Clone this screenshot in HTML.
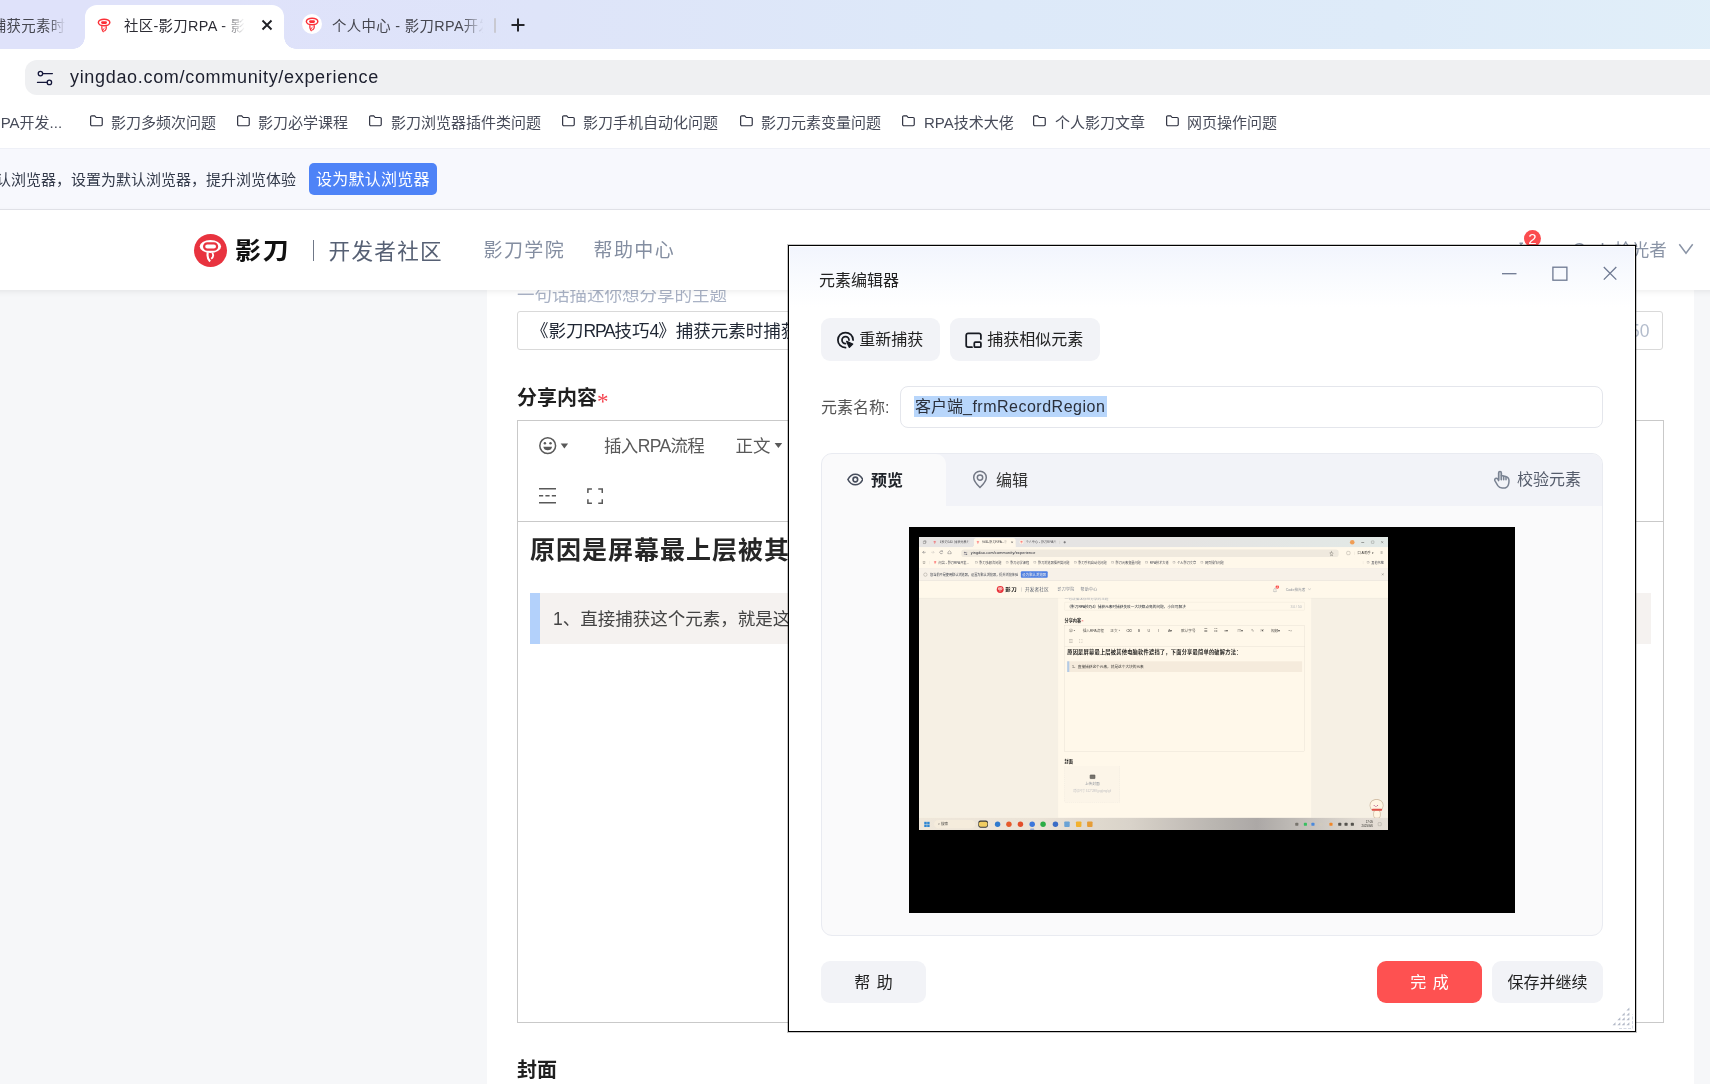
<!DOCTYPE html>
<html lang="zh-CN">
<head>
<meta charset="utf-8">
<title>社区-影刀RPA</title>
<style>
*{box-sizing:border-box;margin:0;padding:0}
html,body{width:1710px;height:1084px;overflow:hidden;background:#fff}
body{position:relative;font-family:"Liberation Sans","Noto Sans CJK SC",sans-serif;color:#222;font-size:15px}
.a{position:absolute;white-space:nowrap}
.scr{position:absolute;left:0;top:0;width:2240px;height:1400px;overflow:hidden;background:#fff}
.tabbar{left:0;top:0;width:2240px;height:49px;background:linear-gradient(90deg,#dfe2fa 0%,#dfe2fa 18%,#dee4f9 32%,#dde9f9 52%,#deebf9 70%,#e1eff9 86%,#e1eff9 100%)}
.tabact{top:5px;width:199px;height:44px;background:#fff;border-radius:12px 12px 0 0}
.tabact:before,.tabact:after{content:"";position:absolute;bottom:0;width:12px;height:12px}
.tabact:before{left:-12px;background:radial-gradient(circle at 0 0,rgba(255,255,255,0) 11.500px,#fff 12px)}
.tabact:after{right:-12px;background:radial-gradient(circle at 100% 0,rgba(255,255,255,0) 11.500px,#fff 12px)}
.tt{font-size:14.400px;color:#2b2b33;top:14.500px;line-height:22px;overflow:hidden;letter-spacing:.35px}
.addr{left:0;top:49px;width:2240px;height:47px;background:#fff}
.pill{top:60px;height:35px;background:#eff0f2;border-radius:12px}
.url{top:65px;font-size:18px;line-height:24px;color:#1c1f2e;letter-spacing:.68px}
.bm{left:0;top:96px;width:2240px;height:52px;background:#fff}
.bmi{top:113px;font-size:15px;line-height:20px;color:#474b59}
.fold{top:115px;width:13.500px;height:11.700px}
.info{left:0;top:148px;width:2240px;height:62px;background:#f7f8fd;border-top:1px solid #eef0f7;border-bottom:1px solid #e3e4ea}
.infot{top:169px;font-size:15px;line-height:22px;color:#333a4a}
.setbtn{top:163px;width:128px;height:32px;border-radius:5px;background:#4e83f7;color:#fff;font-size:16px;line-height:34.500px;text-align:center;letter-spacing:.25px}
.pagebg{left:0;top:210px;width:2240px;height:1130px;background:#f6f7f9}
.col{top:290px;width:1207px;height:1050px;background:#fff}
.hdr{left:0;top:210px;width:2240px;height:80px;background:#fff;box-shadow:0 2px 6px rgba(0,0,0,.07)}
.logo{top:234px;width:33px;height:33px;border-radius:50%;background:#e8333f}
.brand{top:232.500px;font-size:26px;line-height:36px;font-weight:700;color:#111;letter-spacing:1.700px;transform:scaleY(.93);transform-origin:0 50%}
.sep{top:240px;width:1px;height:21px;background:#6f7787}
.comm{top:233.500px;font-size:21.600px;line-height:36px;color:#566074;letter-spacing:1.300px}
.nav{top:236px;font-size:19px;line-height:30px;color:#848ea1;letter-spacing:1.400px}
.ph{top:283px;font-size:17.500px;line-height:24px;color:#a9b2c5}
.tinput{top:311px;width:1146px;height:39px;border:1px solid #d9d9d9;border-radius:3px;background:#fff}
.tin{top:318px;font-size:17.500px;line-height:26px;color:#1f2633}
.h20{font-size:20px;line-height:28px;font-weight:700;color:#1f1f1f}
.ed{top:420px;width:1147px;height:603px;border:1px solid #c9c9c9;background:#fff}
.edline{top:521px;width:1145px;height:1px;background:#c9c9c9}
.tb{font-size:17.500px;line-height:26px;color:#595959;top:433px}
.h26{top:530.500px;font-size:25px;line-height:38px;font-weight:700;color:#262626;letter-spacing:1px}
.bq{top:593px;width:1121px;height:51px;background:#f5f2f0;border-left:10px solid #b3d1fb}
.bqt{top:606px;font-size:17.500px;line-height:26px;color:#434343}
.task{left:0;top:1340px;width:2240px;height:60px;background:linear-gradient(90deg,#efeeee 0%,#ebeaeb 25%,#d9d9dc 45%,#bbbcc2 62%,#acadb5 72%,#c9cad0 84%,#e2e2e6 94%,#e6e6ea 100%)}
/* dialog */
.dlg{left:788px;top:245px;width:848px;height:787px;border:1px solid #000;background:#fff;box-shadow:0 0 0 1px rgba(0,0,0,.22)}
.dgrad{left:1px;top:1px;width:844px;height:60px;background:linear-gradient(180deg,#f2f5fd 0%,#f8fafe 45%,#fff 100%)}
.d16{font-size:16px;line-height:24px;color:#222}
.gbtn{background:#f2f3f7;border-radius:9px;height:42.600px}
.dinput{left:900px;top:386px;width:703px;height:42px;border:1px solid #e4e6ec;border-radius:8px;background:#fff}
.sel{left:914px;top:396px;height:21px;background:#b8d6fb}
.panel{left:821px;top:453px;width:782px;height:483px;border:1px solid #e9ebf1;border-radius:11px;background:#fafafb;overflow:hidden}
.ptabs{left:0;top:0;width:782px;height:52px;background:#f2f3f8}
.ptact{left:0;top:0;width:124px;height:53px;background:#fafafb;border-radius:10px 10px 0 0}
.black{left:909px;top:527px;width:606px;height:386px;background:#000}
.inner{left:918.500px;top:536.500px;width:469.500px;height:293.500px;overflow:hidden}
.inner .scr{transform:scale(.2096);transform-origin:0 0}
.inner .tabbar{background:linear-gradient(90deg,#e6ebf8 0%,#e5ebf8 55%,#e2f0fb 100%)}
.tint{left:0;top:0;width:470px;height:294px;background:#fff8ea;mix-blend-mode:multiply}
</style>
</head>
<body>
<div class="scr" style="left:-177px">
<div class="a tabbar"></div>
<svg class="a" style="left:18px;top:16px" width="18" height="18" viewBox="0 0 18 18" fill="none" stroke="#333" stroke-width="1.500"><rect x="1.500" y="4.500" width="12" height="11" rx="2"/><path d="M5 1.500h9.500a2 2 0 0 1 2 2V12"/></svg>
<svg class="a" style="left:68px;top:18px" width="14" height="15" viewBox="0 0 14 15"><ellipse cx="7.100" cy="4.500" rx="5.750" ry="3.250" fill="none" stroke="#fb3038" stroke-width="1.450"/><rect x="4.100" y="3.200" width="5.900" height="2.700" rx="1.350" fill="#fb3038"/><path d="M4.900 8.100c-.400 2.500.200 4.500 1.700 6M9.100 8.100c.600 2.100-.100 3.900-1.800 5.100" fill="none" stroke="#fb3038" stroke-width="1.150"/><path d="M7.700 9.700c-.900.700-1.300 1.500-1.300 2.400" fill="none" stroke="#fb3038" stroke-width=".800"/></svg>
<div class="a tt" style="left:93px;width:151px;color:#45464f;-webkit-mask-image:linear-gradient(90deg,#000 88%,transparent 99%);mask-image:linear-gradient(90deg,#000 88%,transparent 99%)">【技巧54】捕获元素时捕获</div>
<div class="a tabact" style="left:261.5px;width:199.500px"></div>
<svg class="a" style="left:274px;top:18px" width="14" height="15" viewBox="0 0 14 15"><ellipse cx="7.100" cy="4.500" rx="5.750" ry="3.250" fill="none" stroke="#fb3038" stroke-width="1.450"/><rect x="4.100" y="3.200" width="5.900" height="2.700" rx="1.350" fill="#fb3038"/><path d="M4.900 8.100c-.400 2.500.200 4.500 1.700 6M9.100 8.100c.600 2.100-.100 3.900-1.800 5.100" fill="none" stroke="#fb3038" stroke-width="1.150"/><path d="M7.700 9.700c-.900.700-1.300 1.500-1.300 2.400" fill="none" stroke="#fb3038" stroke-width=".800"/></svg>
<div class="a tt" style="left:301px;width:122px;-webkit-mask-image:linear-gradient(90deg,#000 80%,transparent 99%);mask-image:linear-gradient(90deg,#000 80%,transparent 99%)">社区-影刀RPA - 影刀</div>
<svg class="a" style="left:438px;top:19px" width="12" height="12" viewBox="0 0 12 12"><path d="M1.500 1.500l9 9M10.500 1.500l-9 9" stroke="#1f2026" stroke-width="1.900" fill="none"/></svg>
<div class="a" style="left:479px;top:14px;width:20px;height:20px;border-radius:50%;background:#fff"></div>
<svg class="a" style="left:482px;top:17px" width="14" height="15" viewBox="0 0 14 15"><ellipse cx="7.100" cy="4.500" rx="5.750" ry="3.250" fill="none" stroke="#fb3038" stroke-width="1.450"/><rect x="4.100" y="3.200" width="5.900" height="2.700" rx="1.350" fill="#fb3038"/><path d="M4.900 8.100c-.400 2.500.200 4.500 1.700 6M9.100 8.100c.600 2.100-.100 3.900-1.800 5.100" fill="none" stroke="#fb3038" stroke-width="1.150"/><path d="M7.700 9.700c-.900.700-1.300 1.500-1.300 2.400" fill="none" stroke="#fb3038" stroke-width=".800"/></svg>
<div class="a tt" style="left:509px;width:153px;color:#45464f;-webkit-mask-image:linear-gradient(90deg,#000 85%,transparent 99%);mask-image:linear-gradient(90deg,#000 85%,transparent 99%)">个人中心 - 影刀RPA开发</div>
<div class="a" style="left:671px;top:18px;width:2px;height:15px;background:#c9c9d1;border-radius:1px"></div>
<svg class="a" style="left:688px;top:18px" width="14" height="14" viewBox="0 0 14 14"><path d="M7 .500v13M.500 7h13" stroke="#24252b" stroke-width="2" fill="none"/></svg>
<div class="a" style="left:2056px;top:14px;width:22px;height:22px;border-radius:50%;background:#f0a35e"></div>
<div class="a" style="left:2110px;top:24px;width:14px;height:1.500px;background:#333"></div>
<div class="a" style="left:2158px;top:18px;width:13px;height:13px;border:1.500px solid #333;border-radius:2px"></div>
<svg class="a" style="left:2203px;top:18px" width="14" height="14" viewBox="0 0 14 14"><path d="M1 1l12 12M13 1L1 13" stroke="#333" stroke-width="1.500"/></svg>
<div class="a addr"></div>
<svg class="a" style="left:14px;top:62px" width="160" height="22" viewBox="0 0 160 22" fill="none" stroke="#3a3d4a" stroke-width="1.800"><path d="M18 11H4M10 4.500L3.500 11l6.500 6.500"/><path d="M44 11h14M52 4.500l6.500 6.500-6.500 6.500" stroke="#b9bbc4"/><path d="M97.500 6.500A7 7 0 1 0 99 13M98 2v5h-5"/><path d="M124 10.500l7.500-6.500 7.500 6.500V18.500h-15z"/></svg>
<div class="a pill" style="left:202px;width:1800px"></div>
<svg class="a" style="left:213px;top:68px" width="18" height="18" viewBox="0 0 18 18" fill="none" stroke="#14173a" stroke-width="1.300" stroke-linecap="round"><circle cx="4.450" cy="5.600" r="2.200"/><path d="M7 5.600H16.400"/><circle cx="13.400" cy="14.400" r="2.200"/><path d="M1.500 14.400H10.900"/></svg>
<div class="a url" style="left:247px">yingdao.com/community/experience</div>
<div class="a" style="left:1958px;top:64px;font-size:20px;line-height:26px;color:#444">☆</div>
<div class="a" style="left:2040px;top:68px;width:17px;height:17px;border:1.800px solid #444;border-radius:5px"></div>
<div class="a" style="left:2078px;top:70px;width:1px;height:16px;background:#ccc"></div>
<div class="a" style="left:2092px;top:66px;font-size:15px;line-height:22px;color:#333">口 AI助手 ▾</div>
<div class="a" style="left:2202px;top:62px;font-size:20px;line-height:26px;color:#333">≡</div>
<div class="a bm"></div>
<svg class="a" style="left:16px;top:113px" width="16" height="16" viewBox="0 0 16 16" fill="none" stroke="#555" stroke-width="1.400"><path d="M8 1.500l2 4.300 4.600.600-3.400 3.200.900 4.600L8 12l-4.100 2.200.900-4.600L1.400 6.400 6 5.800z"/></svg>
<div class="a" style="left:49px;top:114px;width:1px;height:16px;background:#d0d0d6"></div>
<svg class="a" style="left:70px;top:114px" width="14" height="15" viewBox="0 0 14 15"><ellipse cx="7.100" cy="4.500" rx="5.750" ry="3.250" fill="none" stroke="#fb3038" stroke-width="1.450"/><rect x="4.100" y="3.200" width="5.900" height="2.700" rx="1.350" fill="#fb3038"/><path d="M4.900 8.100c-.400 2.500.200 4.500 1.700 6M9.100 8.100c.600 2.100-.100 3.900-1.800 5.100" fill="none" stroke="#fb3038" stroke-width="1.150"/><path d="M7.700 9.700c-.900.700-1.300 1.500-1.300 2.400" fill="none" stroke="#fb3038" stroke-width=".800"/></svg>
<div class="a bmi" style="left:93.500px">问答 - 影刀RPA开发...</div>
<svg class="a fold" style="left:267px" viewBox="0 0 15 13" fill="none" stroke="#2b2e3d" stroke-width="1.300"><path d="M.700 2.200a1.300 1.300 0 0 1 1.300-1.300h3.200l1.700 1.900h5.400a1.300 1.300 0 0 1 1.300 1.300v6.600a1.300 1.300 0 0 1-1.300 1.300H2a1.300 1.300 0 0 1-1.300-1.300z"/></svg><div class="a bmi" style="left:288px">影刀多频次问题</div>
<svg class="a fold" style="left:414px" viewBox="0 0 15 13" fill="none" stroke="#2b2e3d" stroke-width="1.300"><path d="M.700 2.200a1.300 1.300 0 0 1 1.300-1.300h3.200l1.700 1.900h5.400a1.300 1.300 0 0 1 1.300 1.300v6.600a1.300 1.300 0 0 1-1.300 1.300H2a1.300 1.300 0 0 1-1.300-1.300z"/></svg><div class="a bmi" style="left:435px">影刀必学课程</div>
<svg class="a fold" style="left:546px" viewBox="0 0 15 13" fill="none" stroke="#2b2e3d" stroke-width="1.300"><path d="M.700 2.200a1.300 1.300 0 0 1 1.300-1.300h3.200l1.700 1.900h5.400a1.300 1.300 0 0 1 1.300 1.300v6.600a1.300 1.300 0 0 1-1.300 1.300H2a1.300 1.300 0 0 1-1.300-1.300z"/></svg><div class="a bmi" style="left:568px">影刀浏览器插件类问题</div>
<svg class="a fold" style="left:739px" viewBox="0 0 15 13" fill="none" stroke="#2b2e3d" stroke-width="1.300"><path d="M.700 2.200a1.300 1.300 0 0 1 1.300-1.300h3.200l1.700 1.900h5.400a1.300 1.300 0 0 1 1.300 1.300v6.600a1.300 1.300 0 0 1-1.300 1.300H2a1.300 1.300 0 0 1-1.300-1.300z"/></svg><div class="a bmi" style="left:760px">影刀手机自动化问题</div>
<svg class="a fold" style="left:917px" viewBox="0 0 15 13" fill="none" stroke="#2b2e3d" stroke-width="1.300"><path d="M.700 2.200a1.300 1.300 0 0 1 1.300-1.300h3.200l1.700 1.900h5.400a1.300 1.300 0 0 1 1.300 1.300v6.600a1.300 1.300 0 0 1-1.300 1.300H2a1.300 1.300 0 0 1-1.300-1.300z"/></svg><div class="a bmi" style="left:938px">影刀元素变量问题</div>
<svg class="a fold" style="left:1079px" viewBox="0 0 15 13" fill="none" stroke="#2b2e3d" stroke-width="1.300"><path d="M.700 2.200a1.300 1.300 0 0 1 1.300-1.300h3.200l1.700 1.900h5.400a1.300 1.300 0 0 1 1.300 1.300v6.600a1.300 1.300 0 0 1-1.300 1.300H2a1.300 1.300 0 0 1-1.300-1.300z"/></svg><div class="a bmi" style="left:1101px">RPA技术大佬</div>
<svg class="a fold" style="left:1210px" viewBox="0 0 15 13" fill="none" stroke="#2b2e3d" stroke-width="1.300"><path d="M.700 2.200a1.300 1.300 0 0 1 1.300-1.300h3.200l1.700 1.900h5.400a1.300 1.300 0 0 1 1.300 1.300v6.600a1.300 1.300 0 0 1-1.300 1.300H2a1.300 1.300 0 0 1-1.300-1.300z"/></svg><div class="a bmi" style="left:1232px">个人影刀文章</div>
<svg class="a fold" style="left:1343px" viewBox="0 0 15 13" fill="none" stroke="#2b2e3d" stroke-width="1.300"><path d="M.700 2.200a1.300 1.300 0 0 1 1.300-1.300h3.200l1.700 1.900h5.400a1.300 1.300 0 0 1 1.300 1.300v6.600a1.300 1.300 0 0 1-1.300 1.300H2a1.300 1.300 0 0 1-1.300-1.300z"/></svg><div class="a bmi" style="left:1364px">网页操作问题</div>
<div class="a" style="left:2118px;top:114px;width:1px;height:16px;background:#d0d0d6"></div>
<svg class="a fold" style="left:2136px" viewBox="0 0 15 13" fill="none" stroke="#2b2e3d" stroke-width="1.300"><path d="M.700 2.200a1.300 1.300 0 0 1 1.300-1.300h3.200l1.700 1.900h5.400a1.300 1.300 0 0 1 1.300 1.300v6.600a1.300 1.300 0 0 1-1.300 1.300H2a1.300 1.300 0 0 1-1.300-1.300z"/></svg><div class="a bmi" style="left:2158px">其他书签</div>
<div class="a info"></div>
<div class="a" style="left:22px;top:171px;width:17px;height:17px;border:1.800px solid #333;border-radius:50%"></div>
<div class="a infot" style="left:53px">您当前不是使用默认浏览器，设置为默认浏览器，提升浏览体验</div>
<div class="a setbtn" style="left:486px">设为默认浏览器</div>
<svg class="a" style="left:2206px;top:172px" width="13" height="13" viewBox="0 0 13 13"><path d="M1 1l11 11M12 1L1 12" stroke="#444" stroke-width="1.400"/></svg>
<div class="a pagebg"></div>
<div class="a col" style="left:664px"></div>
<div class="a ph" style="left:694px">一句话描述你想分享的主题</div>
<div class="a tinput" style="left:694px"></div>
<div class="a tin" style="left:708px">《影刀<span style="letter-spacing:-1.200px">RPA</span>技巧<span style="letter-spacing:-1.200px">4</span>》捕获元素时捕获失败一大块都点亮的问题，小白可解决</div>
<div class="a tin" style="left:1773px;color:#b3bccc">34 / 50</div>
<div class="a h20" style="left:694px;top:383.500px">分享内容</div>
<div class="a" style="left:774px;top:386.500px;font-size:23px;line-height:30px;color:#f5434f;font-family:'Liberation Serif',serif">*</div>
<div class="a ed" style="left:694px"></div>
<div class="a edline" style="left:695px"></div>
<svg class="a" style="left:715px;top:436px" width="34" height="20" viewBox="0 0 34 20"><circle cx="9.700" cy="9.700" r="7.900" fill="none" stroke="#595959" stroke-width="1.500"/><circle cx="6.900" cy="7.300" r="1.250" fill="#595959"/><circle cx="12.500" cy="7.300" r="1.250" fill="#595959"/><path d="M5.300 10.800a4.500 4.500 0 0 0 8.800 0z" fill="#595959"/><path d="M22.700 7.500h7.400l-3.700 5z" fill="#595959"/></svg>
<div class="a tb" style="left:781px;letter-spacing:-.65px">插入RPA流程</div>
<div class="a tb" style="left:912.5px">正文</div>
<svg class="a" style="left:951px;top:442px" width="9" height="7" viewBox="0 0 9 7"><path d="M.600 1h7.600L4.400 6z" fill="#595959"/></svg>
<div class="a tb" style="left:950px;width:100px;text-align:center">⌫</div>
<div class="a tb" style="left:1000px;width:100px;text-align:center">B</div>
<div class="a tb" style="left:1047px;width:100px;text-align:center">U</div>
<div class="a tb" style="left:1093px;width:100px;text-align:center">I</div>
<div class="a tb" style="left:1148px;width:100px;text-align:center">A▾</div>
<div class="a tb" style="left:1235px;width:100px;text-align:center">默认字号</div>
<div class="a tb" style="left:1317px;width:100px;text-align:center">☰</div>
<div class="a tb" style="left:1365px;width:100px;text-align:center">☷</div>
<div class="a tb" style="left:1416px;width:100px;text-align:center">≡▾</div>
<div class="a tb" style="left:1483px;width:100px;text-align:center">▦▾</div>
<div class="a tb" style="left:1540px;width:100px;text-align:center">✎</div>
<div class="a tb" style="left:1588px;width:100px;text-align:center">▣</div>
<div class="a tb" style="left:1651px;width:100px;text-align:center">视频▾</div>
<div class="a tb" style="left:1720px;width:100px;text-align:center">〜</div>
<svg class="a" style="left:715px;top:486px" width="20" height="20" viewBox="0 0 20 20" fill="none" stroke="#595959" stroke-width="1.500"><path d="M1 2.800h17M1 16.800h17"/><path d="M1 9.800h17" stroke-dasharray="4.200 2.200"/></svg>
<svg class="a" style="left:763.7px;top:487.800px" width="16.200" height="16.200" viewBox="0 0 18 18" fill="none" stroke="#595959" stroke-width="1.700"><path d="M1 5.500V1h4.500M12.500 1H17v4.500M17 12.500V17h-4.500M5.500 17H1v-4.500"/></svg>
<div class="a h26" style="left:707px">原因是屏幕最上层被其他电脑软件遮挡了，下面分享最简单的破解方法：</div>
<div class="a bq" style="left:707px"></div>
<div class="a bqt" style="left:730px">1、直接捕获这个元素，就是这个大块的元素</div>
<div class="a h20" style="left:694px;top:1055.500px">封面</div>
<div class="a" style="left:694px;top:1091px;width:265px;height:176px;background:#fcfcfd;border:2px dashed #e6e8ee;border-radius:4px"></div>
<div class="a" style="left:815px;top:1134px;width:26px;height:20px;border:3px solid #555;border-radius:3px;background:#777"></div>
<div class="a" style="left:694px;top:1166px;width:265px;text-align:center;font-size:17.500px;line-height:26px;color:#8a94a6">上传封面</div>
<div class="a" style="left:694px;top:1202px;width:265px;text-align:center;font-size:14px;line-height:22px;color:#c3c9d6">建议尺寸 512*288 jpg/png/gif</div>
<div class="a hdr"></div>
<div class="a logo" style="left:371px;top:233.500px"></div>
<svg class="a" style="left:371px;top:233.800px" width="33" height="33" viewBox="0 0 33 33" fill="none"><ellipse cx="16.400" cy="12.500" rx="10.700" ry="6.400" fill="#fff"/><rect x="10.100" y="9.300" width="13" height="6.300" rx="3.150" stroke="#e8333f" stroke-width="2.200"/><path d="M13.900 18.300c-1 3.600-.200 6.600 2.200 9.200" stroke="#fff" stroke-width="2.100"/><path d="M18.300 18.800c1.400 2.300 1 4.400-1.100 5.900" stroke="#fff" stroke-width="1.800"/></svg>
<div class="a brand" style="left:412px">影刀</div>
<div class="a sep" style="left:490px"></div>
<div class="a comm" style="left:505.5px">开发者社区</div>
<div class="a nav" style="left:660.5px">影刀学院</div>
<div class="a nav" style="left:770.5px">帮助中心</div>
<svg class="a" style="left:1687px;top:241px" width="22" height="24" viewBox="0 0 22 24" fill="none" stroke="#8a94a6" stroke-width="1.600"><path d="M9.500 2.300h3.500M11 2.300v2.700"/><path d="M11 5.500a6 6 0 0 0-6 6V16L3 19h16l-2-3v-4.500a6 6 0 0 0-6-6zM8.500 22h5"/></svg>
<div class="a" style="left:1701px;top:229.500px;width:17px;height:17px;border-radius:50%;background:#fb4c4f;color:#fff;font-size:15px;line-height:17.500px;text-align:center">2</div>
<div class="a" style="left:1749.4px;top:237px;font-size:17.500px;line-height:26px;color:#8a94a6">Code拾光者</div>
<svg class="a" style="left:1855px;top:243px" width="16" height="12" viewBox="0 0 16 12" fill="none" stroke="#8a94a6" stroke-width="1.500"><path d="M1.300 1.300L8 10.300l6.700-9"/></svg>
<div class="a" style="left:2150px;top:1250px;width:66px;height:60px;border:3px solid #c9b9a6;border-radius:50% 50% 46% 46%;background:#fffdf8"></div>
<div class="a" style="left:2168px;top:1302px;width:34px;height:40px;border:3px solid #c9b9a6;border-radius:40% 40% 30% 30%;background:#fffdf8"></div>
<div class="a" style="left:2160px;top:1296px;width:50px;height:10px;background:#e0554f;border-radius:5px"></div>
<div class="a" style="left:2168px;top:1274px;font-size:18px;line-height:20px;color:#a48">•ᴗ•</div>
<div class="a task"></div>
<svg class="a" style="left:24px;top:1357px" width="28" height="28" viewBox="0 0 28 28" fill="#2d8ae6"><rect x="1" y="1" width="12" height="12"/><rect x="15" y="1" width="12" height="12"/><rect x="1" y="15" width="12" height="12"/><rect x="15" y="15" width="12" height="12"/></svg>
<div class="a" style="left:72px;top:1350px;width:196px;height:40px;border-radius:20px;background:#f5f3f0"></div>
<div class="a" style="left:90px;top:1359px;font-size:17px;line-height:22px;color:#444">⌕ 搜索</div>
<div class="a" style="left:292px;top:1357px;width:26px;height:26px;border-radius:4px;background:#e8c55a"></div>
<div class="a" style="left:362px;top:1357px;width:26px;height:26px;border-radius:50%;background:#2f7de1"></div>
<div class="a" style="left:416px;top:1357px;width:26px;height:26px;border-radius:50%;background:#e65c2e"></div>
<div class="a" style="left:471px;top:1357px;width:26px;height:26px;border-radius:50%;background:#e3502f"></div>
<div class="a" style="left:527px;top:1357px;width:26px;height:26px;border-radius:50%;background:#3b7af0"></div>
<div class="a" style="left:579px;top:1357px;width:26px;height:26px;border-radius:50%;background:#2bb24c"></div>
<div class="a" style="left:638px;top:1357px;width:26px;height:26px;border-radius:50%;background:#3a6fd8"></div>
<div class="a" style="left:693px;top:1357px;width:26px;height:26px;border-radius:4px;background:#6aa7e8"></div>
<div class="a" style="left:749px;top:1357px;width:26px;height:26px;border-radius:4px;background:#f2b632"></div>
<div class="a" style="left:802px;top:1357px;width:26px;height:26px;border-radius:4px;background:#e6a23c"></div>
<div class="a" style="left:530px;top:1392px;width:20px;height:4px;border-radius:2px;background:#4a7be0"></div>
<div class="a" style="left:283px;top:1353px;width:46px;height:34px;border-radius:10px;background:#3a3a3a"></div>
<div class="a" style="left:286px;top:1358px;width:40px;height:24px;border-radius:8px;background:#f1d36a"></div>
<div class="a" style="left:1795px;top:1363px;width:15px;height:15px;border-radius:4px;background:#777"></div>
<div class="a" style="left:1836px;top:1363px;width:15px;height:15px;border-radius:4px;background:#39c56a"></div>
<div class="a" style="left:1872px;top:1363px;width:15px;height:15px;border-radius:4px;background:#4b8df0"></div>
<div class="a" style="left:1912px;top:1363px;width:15px;height:15px;border-radius:4px;background:#d0d0d0"></div>
<div class="a" style="left:1958px;top:1363px;width:15px;height:15px;border-radius:4px;background:#f08a2a"></div>
<div class="a" style="left:2000px;top:1363px;width:15px;height:15px;border-radius:4px;background:#555"></div>
<div class="a" style="left:2030px;top:1363px;width:15px;height:15px;border-radius:4px;background:#555"></div>
<div class="a" style="left:2060px;top:1363px;width:15px;height:15px;border-radius:4px;background:#555"></div>
<div class="a" style="left:2096px;top:1348px;font-size:14px;line-height:20px;color:#333;text-align:right;width:70px">17:05<br>2025/6/6</div>
<div class="a" style="left:2190px;top:1362px;width:16px;height:16px;border:1.500px solid #555;border-radius:3px"></div>
</div>
<div class="a dlg"><div class="a dgrad"></div></div>
<div class="a d16" style="left:819px;top:268.800px">元素编辑器</div>
<svg class="a" style="left:1500px;top:262px" width="120" height="24" viewBox="0 0 120 24" fill="none" stroke="#6d7891" stroke-width="1.300"><path d="M2 11.700h14.500"/><rect x="52.900" y="5.200" width="14" height="13"/><path d="M103.800 5l12.500 12.600M116.300 5L103.800 17.600"/></svg>
<div class="a gbtn" style="left:821px;top:318px;width:119px"></div>
<svg class="a" style="left:836px;top:330px" width="19" height="19" viewBox="0 0 19 19" fill="none" stroke="#171a22" stroke-width="1.750" stroke-linecap="round" stroke-linejoin="round"><path d="M17.100 10.100A7.600 7.600 0 1 0 9.500 17.700"/><path d="M13 10.100A3.500 3.500 0 1 0 9.500 13.600"/><path d="M10.700 11.400l6 2.700-3.300 3.300z" fill="#171a22" stroke-width="1.300"/></svg>
<div class="a d16" style="left:859.200px;top:327.500px">重新捕获</div>
<div class="a gbtn" style="left:950px;top:318px;width:150px"></div>
<svg class="a" style="left:964px;top:330.500px" width="19" height="19" viewBox="0 0 19 19" fill="none" stroke="#171a22" stroke-width="1.750" stroke-linecap="round"><path d="M8 16.200H4.100a1.900 1.900 0 0 1-1.900-1.900V4.200a1.900 1.900 0 0 1 1.900-1.900h10.900a1.900 1.900 0 0 1 1.900 1.900V8"/><rect x="10.300" y="11.200" width="6.600" height="5" rx="1"/></svg>
<div class="a d16" style="left:987.300px;top:327.500px">捕获相似元素</div>
<div class="a d16" style="left:821px;top:395.500px;color:#555">元素名称:</div>
<div class="a dinput"></div>
<div class="a sel" style="width:193px"></div>
<div class="a d16" style="left:915px;top:395px;color:#2a2f3a;letter-spacing:.5px"><span style="letter-spacing:0">客户端</span>_frmRecordRegion</div>
<div class="a panel"><div class="a ptabs"></div><div class="a ptact"></div></div>
<svg class="a" style="left:846.700px;top:472.700px" width="16.700" height="13" viewBox="0 0 18 14" fill="none" stroke="#464d5c" stroke-width="1.750"><path d="M1 7C2.800 3.400 5.600 1.300 9 1.300S15.200 3.400 17 7c-1.800 3.600-4.600 5.700-8 5.700S2.800 10.600 1 7z"/><circle cx="9" cy="7" r="2.500"/></svg>
<div class="a d16" style="left:871px;top:469px;font-weight:700;color:#1f2329">预览</div>
<svg class="a" style="left:972px;top:470px" width="16" height="19" viewBox="0 0 16 19" fill="none" stroke="#737885" stroke-width="1.500"><path d="M8 1.200a6.300 6.300 0 0 0-6.300 6.300c0 4 4.500 8.300 6.300 10 1.800-1.700 6.300-6 6.300-10A6.300 6.300 0 0 0 8 1.200z"/><circle cx="8" cy="7.600" r="2.700"/></svg>
<div class="a d16" style="left:996px;top:468.500px;color:#333">编辑</div>
<svg class="a" style="left:1493px;top:470px" width="18" height="20" viewBox="0 0 18 20" fill="none" stroke="#7a8393" stroke-width="1.500" stroke-linejoin="round" stroke-linecap="round"><path d="M5.600 10.600V3a1.400 1.400 0 0 1 2.800 0v2.400l4.300 1.100c2 .500 3.300 2 3.300 4.200 0 1.500-.200 2.800-.700 4.200-.800 2.100-2.700 3.100-5 3.100h-1.200c-1.900 0-3.200-.700-4.300-2.300L2 10.900c-.600-.900-.300-1.900.500-2.400.800-.400 1.600-.200 2.200.500z"/><rect x="5.600" y="1.700" width="2.800" height="8.500" rx="1.400" fill="rgba(122,131,147,.35)" stroke="none"/><path d="M8.400 5.400v4.300M10.700 6.600v3.200M13 7.200v2.600"/></svg>
<div class="a d16" style="left:1517px;top:467.500px;color:#555c6b">校验元素</div>
<div class="a black"></div>
<div class="a inner">
<div class="scr">
<div class="a tabbar"></div>
<svg class="a" style="left:18px;top:16px" width="18" height="18" viewBox="0 0 18 18" fill="none" stroke="#333" stroke-width="1.500"><rect x="1.500" y="4.500" width="12" height="11" rx="2"/><path d="M5 1.500h9.500a2 2 0 0 1 2 2V12"/></svg>
<svg class="a" style="left:68px;top:18px" width="14" height="15" viewBox="0 0 14 15"><ellipse cx="7.100" cy="4.500" rx="5.750" ry="3.250" fill="none" stroke="#fb3038" stroke-width="1.450"/><rect x="4.100" y="3.200" width="5.900" height="2.700" rx="1.350" fill="#fb3038"/><path d="M4.900 8.100c-.400 2.500.200 4.500 1.700 6M9.100 8.100c.600 2.100-.100 3.900-1.800 5.100" fill="none" stroke="#fb3038" stroke-width="1.150"/><path d="M7.700 9.700c-.900.700-1.300 1.500-1.300 2.400" fill="none" stroke="#fb3038" stroke-width=".800"/></svg>
<div class="a tt" style="left:93px;width:151px;color:#45464f;-webkit-mask-image:linear-gradient(90deg,#000 88%,transparent 99%);mask-image:linear-gradient(90deg,#000 88%,transparent 99%)">【技巧54】捕获元素时捕获</div>
<div class="a tabact" style="left:261.5px;width:199.500px"></div>
<svg class="a" style="left:274px;top:18px" width="14" height="15" viewBox="0 0 14 15"><ellipse cx="7.100" cy="4.500" rx="5.750" ry="3.250" fill="none" stroke="#fb3038" stroke-width="1.450"/><rect x="4.100" y="3.200" width="5.900" height="2.700" rx="1.350" fill="#fb3038"/><path d="M4.900 8.100c-.400 2.500.200 4.500 1.700 6M9.100 8.100c.600 2.100-.100 3.900-1.800 5.100" fill="none" stroke="#fb3038" stroke-width="1.150"/><path d="M7.700 9.700c-.900.700-1.300 1.500-1.300 2.400" fill="none" stroke="#fb3038" stroke-width=".800"/></svg>
<div class="a tt" style="left:301px;width:122px;-webkit-mask-image:linear-gradient(90deg,#000 80%,transparent 99%);mask-image:linear-gradient(90deg,#000 80%,transparent 99%)">社区-影刀RPA - 影刀</div>
<svg class="a" style="left:438px;top:19px" width="12" height="12" viewBox="0 0 12 12"><path d="M1.500 1.500l9 9M10.500 1.500l-9 9" stroke="#1f2026" stroke-width="1.900" fill="none"/></svg>
<div class="a" style="left:479px;top:14px;width:20px;height:20px;border-radius:50%;background:#fff"></div>
<svg class="a" style="left:482px;top:17px" width="14" height="15" viewBox="0 0 14 15"><ellipse cx="7.100" cy="4.500" rx="5.750" ry="3.250" fill="none" stroke="#fb3038" stroke-width="1.450"/><rect x="4.100" y="3.200" width="5.900" height="2.700" rx="1.350" fill="#fb3038"/><path d="M4.900 8.100c-.400 2.500.200 4.500 1.700 6M9.100 8.100c.600 2.100-.100 3.900-1.800 5.100" fill="none" stroke="#fb3038" stroke-width="1.150"/><path d="M7.700 9.700c-.900.700-1.300 1.500-1.300 2.400" fill="none" stroke="#fb3038" stroke-width=".800"/></svg>
<div class="a tt" style="left:509px;width:153px;color:#45464f;-webkit-mask-image:linear-gradient(90deg,#000 85%,transparent 99%);mask-image:linear-gradient(90deg,#000 85%,transparent 99%)">个人中心 - 影刀RPA开发</div>
<div class="a" style="left:671px;top:18px;width:2px;height:15px;background:#c9c9d1;border-radius:1px"></div>
<svg class="a" style="left:688px;top:18px" width="14" height="14" viewBox="0 0 14 14"><path d="M7 .500v13M.500 7h13" stroke="#24252b" stroke-width="2" fill="none"/></svg>
<div class="a" style="left:2056px;top:14px;width:22px;height:22px;border-radius:50%;background:#f0a35e"></div>
<div class="a" style="left:2110px;top:24px;width:14px;height:1.500px;background:#333"></div>
<div class="a" style="left:2158px;top:18px;width:13px;height:13px;border:1.500px solid #333;border-radius:2px"></div>
<svg class="a" style="left:2203px;top:18px" width="14" height="14" viewBox="0 0 14 14"><path d="M1 1l12 12M13 1L1 13" stroke="#333" stroke-width="1.500"/></svg>
<div class="a addr"></div>
<svg class="a" style="left:14px;top:62px" width="160" height="22" viewBox="0 0 160 22" fill="none" stroke="#3a3d4a" stroke-width="1.800"><path d="M18 11H4M10 4.500L3.500 11l6.500 6.500"/><path d="M44 11h14M52 4.500l6.500 6.500-6.500 6.500" stroke="#b9bbc4"/><path d="M97.500 6.500A7 7 0 1 0 99 13M98 2v5h-5"/><path d="M124 10.500l7.500-6.500 7.500 6.500V18.500h-15z"/></svg>
<div class="a pill" style="left:202px;width:1800px"></div>
<svg class="a" style="left:213px;top:68px" width="18" height="18" viewBox="0 0 18 18" fill="none" stroke="#14173a" stroke-width="1.300" stroke-linecap="round"><circle cx="4.450" cy="5.600" r="2.200"/><path d="M7 5.600H16.400"/><circle cx="13.400" cy="14.400" r="2.200"/><path d="M1.500 14.400H10.900"/></svg>
<div class="a url" style="left:247px">yingdao.com/community/experience</div>
<div class="a" style="left:1958px;top:64px;font-size:20px;line-height:26px;color:#444">☆</div>
<div class="a" style="left:2040px;top:68px;width:17px;height:17px;border:1.800px solid #444;border-radius:5px"></div>
<div class="a" style="left:2078px;top:70px;width:1px;height:16px;background:#ccc"></div>
<div class="a" style="left:2092px;top:66px;font-size:15px;line-height:22px;color:#333">口 AI助手 ▾</div>
<div class="a" style="left:2202px;top:62px;font-size:20px;line-height:26px;color:#333">≡</div>
<div class="a bm"></div>
<svg class="a" style="left:16px;top:113px" width="16" height="16" viewBox="0 0 16 16" fill="none" stroke="#555" stroke-width="1.400"><path d="M8 1.500l2 4.300 4.600.600-3.400 3.200.900 4.600L8 12l-4.100 2.200.900-4.600L1.400 6.400 6 5.800z"/></svg>
<div class="a" style="left:49px;top:114px;width:1px;height:16px;background:#d0d0d6"></div>
<svg class="a" style="left:70px;top:114px" width="14" height="15" viewBox="0 0 14 15"><ellipse cx="7.100" cy="4.500" rx="5.750" ry="3.250" fill="none" stroke="#fb3038" stroke-width="1.450"/><rect x="4.100" y="3.200" width="5.900" height="2.700" rx="1.350" fill="#fb3038"/><path d="M4.900 8.100c-.400 2.500.200 4.500 1.700 6M9.100 8.100c.600 2.100-.100 3.900-1.800 5.100" fill="none" stroke="#fb3038" stroke-width="1.150"/><path d="M7.700 9.700c-.900.700-1.300 1.500-1.300 2.400" fill="none" stroke="#fb3038" stroke-width=".800"/></svg>
<div class="a bmi" style="left:93.500px">问答 - 影刀RPA开发...</div>
<svg class="a fold" style="left:267px" viewBox="0 0 15 13" fill="none" stroke="#2b2e3d" stroke-width="1.300"><path d="M.700 2.200a1.300 1.300 0 0 1 1.300-1.300h3.200l1.700 1.900h5.400a1.300 1.300 0 0 1 1.300 1.300v6.600a1.300 1.300 0 0 1-1.300 1.300H2a1.300 1.300 0 0 1-1.300-1.300z"/></svg><div class="a bmi" style="left:288px">影刀多频次问题</div>
<svg class="a fold" style="left:414px" viewBox="0 0 15 13" fill="none" stroke="#2b2e3d" stroke-width="1.300"><path d="M.700 2.200a1.300 1.300 0 0 1 1.300-1.300h3.200l1.700 1.900h5.400a1.300 1.300 0 0 1 1.300 1.300v6.600a1.300 1.300 0 0 1-1.300 1.300H2a1.300 1.300 0 0 1-1.300-1.300z"/></svg><div class="a bmi" style="left:435px">影刀必学课程</div>
<svg class="a fold" style="left:546px" viewBox="0 0 15 13" fill="none" stroke="#2b2e3d" stroke-width="1.300"><path d="M.700 2.200a1.300 1.300 0 0 1 1.300-1.300h3.200l1.700 1.900h5.400a1.300 1.300 0 0 1 1.300 1.300v6.600a1.300 1.300 0 0 1-1.300 1.300H2a1.300 1.300 0 0 1-1.300-1.300z"/></svg><div class="a bmi" style="left:568px">影刀浏览器插件类问题</div>
<svg class="a fold" style="left:739px" viewBox="0 0 15 13" fill="none" stroke="#2b2e3d" stroke-width="1.300"><path d="M.700 2.200a1.300 1.300 0 0 1 1.300-1.300h3.200l1.700 1.900h5.400a1.300 1.300 0 0 1 1.300 1.300v6.600a1.300 1.300 0 0 1-1.300 1.300H2a1.300 1.300 0 0 1-1.300-1.300z"/></svg><div class="a bmi" style="left:760px">影刀手机自动化问题</div>
<svg class="a fold" style="left:917px" viewBox="0 0 15 13" fill="none" stroke="#2b2e3d" stroke-width="1.300"><path d="M.700 2.200a1.300 1.300 0 0 1 1.300-1.300h3.200l1.700 1.900h5.400a1.300 1.300 0 0 1 1.300 1.300v6.600a1.300 1.300 0 0 1-1.300 1.300H2a1.300 1.300 0 0 1-1.300-1.300z"/></svg><div class="a bmi" style="left:938px">影刀元素变量问题</div>
<svg class="a fold" style="left:1079px" viewBox="0 0 15 13" fill="none" stroke="#2b2e3d" stroke-width="1.300"><path d="M.700 2.200a1.300 1.300 0 0 1 1.300-1.300h3.200l1.700 1.900h5.400a1.300 1.300 0 0 1 1.300 1.300v6.600a1.300 1.300 0 0 1-1.300 1.300H2a1.300 1.300 0 0 1-1.300-1.300z"/></svg><div class="a bmi" style="left:1101px">RPA技术大佬</div>
<svg class="a fold" style="left:1210px" viewBox="0 0 15 13" fill="none" stroke="#2b2e3d" stroke-width="1.300"><path d="M.700 2.200a1.300 1.300 0 0 1 1.300-1.300h3.200l1.700 1.900h5.400a1.300 1.300 0 0 1 1.300 1.300v6.600a1.300 1.300 0 0 1-1.300 1.300H2a1.300 1.300 0 0 1-1.300-1.300z"/></svg><div class="a bmi" style="left:1232px">个人影刀文章</div>
<svg class="a fold" style="left:1343px" viewBox="0 0 15 13" fill="none" stroke="#2b2e3d" stroke-width="1.300"><path d="M.700 2.200a1.300 1.300 0 0 1 1.300-1.300h3.200l1.700 1.900h5.400a1.300 1.300 0 0 1 1.300 1.300v6.600a1.300 1.300 0 0 1-1.300 1.300H2a1.300 1.300 0 0 1-1.300-1.300z"/></svg><div class="a bmi" style="left:1364px">网页操作问题</div>
<div class="a" style="left:2118px;top:114px;width:1px;height:16px;background:#d0d0d6"></div>
<svg class="a fold" style="left:2136px" viewBox="0 0 15 13" fill="none" stroke="#2b2e3d" stroke-width="1.300"><path d="M.700 2.200a1.300 1.300 0 0 1 1.300-1.300h3.200l1.700 1.900h5.400a1.300 1.300 0 0 1 1.300 1.300v6.600a1.300 1.300 0 0 1-1.300 1.300H2a1.300 1.300 0 0 1-1.300-1.300z"/></svg><div class="a bmi" style="left:2158px">其他书签</div>
<div class="a info"></div>
<div class="a" style="left:22px;top:171px;width:17px;height:17px;border:1.800px solid #333;border-radius:50%"></div>
<div class="a infot" style="left:53px">您当前不是使用默认浏览器，设置为默认浏览器，提升浏览体验</div>
<div class="a setbtn" style="left:486px">设为默认浏览器</div>
<svg class="a" style="left:2206px;top:172px" width="13" height="13" viewBox="0 0 13 13"><path d="M1 1l11 11M12 1L1 12" stroke="#444" stroke-width="1.400"/></svg>
<div class="a pagebg"></div>
<div class="a col" style="left:664px"></div>
<div class="a ph" style="left:694px">一句话描述你想分享的主题</div>
<div class="a tinput" style="left:694px"></div>
<div class="a tin" style="left:708px">《影刀<span style="letter-spacing:-1.200px">RPA</span>技巧<span style="letter-spacing:-1.200px">4</span>》捕获元素时捕获失败一大块都点亮的问题，小白可解决</div>
<div class="a tin" style="left:1773px;color:#b3bccc">34 / 50</div>
<div class="a h20" style="left:694px;top:383.500px">分享内容</div>
<div class="a" style="left:774px;top:386.500px;font-size:23px;line-height:30px;color:#f5434f;font-family:'Liberation Serif',serif">*</div>
<div class="a ed" style="left:694px"></div>
<div class="a edline" style="left:695px"></div>
<svg class="a" style="left:715px;top:436px" width="34" height="20" viewBox="0 0 34 20"><circle cx="9.700" cy="9.700" r="7.900" fill="none" stroke="#595959" stroke-width="1.500"/><circle cx="6.900" cy="7.300" r="1.250" fill="#595959"/><circle cx="12.500" cy="7.300" r="1.250" fill="#595959"/><path d="M5.300 10.800a4.500 4.500 0 0 0 8.800 0z" fill="#595959"/><path d="M22.700 7.500h7.400l-3.700 5z" fill="#595959"/></svg>
<div class="a tb" style="left:781px;letter-spacing:-.65px">插入RPA流程</div>
<div class="a tb" style="left:912.5px">正文</div>
<svg class="a" style="left:951px;top:442px" width="9" height="7" viewBox="0 0 9 7"><path d="M.600 1h7.600L4.400 6z" fill="#595959"/></svg>
<div class="a tb" style="left:950px;width:100px;text-align:center">⌫</div>
<div class="a tb" style="left:1000px;width:100px;text-align:center">B</div>
<div class="a tb" style="left:1047px;width:100px;text-align:center">U</div>
<div class="a tb" style="left:1093px;width:100px;text-align:center">I</div>
<div class="a tb" style="left:1148px;width:100px;text-align:center">A▾</div>
<div class="a tb" style="left:1235px;width:100px;text-align:center">默认字号</div>
<div class="a tb" style="left:1317px;width:100px;text-align:center">☰</div>
<div class="a tb" style="left:1365px;width:100px;text-align:center">☷</div>
<div class="a tb" style="left:1416px;width:100px;text-align:center">≡▾</div>
<div class="a tb" style="left:1483px;width:100px;text-align:center">▦▾</div>
<div class="a tb" style="left:1540px;width:100px;text-align:center">✎</div>
<div class="a tb" style="left:1588px;width:100px;text-align:center">▣</div>
<div class="a tb" style="left:1651px;width:100px;text-align:center">视频▾</div>
<div class="a tb" style="left:1720px;width:100px;text-align:center">〜</div>
<svg class="a" style="left:715px;top:486px" width="20" height="20" viewBox="0 0 20 20" fill="none" stroke="#595959" stroke-width="1.500"><path d="M1 2.800h17M1 16.800h17"/><path d="M1 9.800h17" stroke-dasharray="4.200 2.200"/></svg>
<svg class="a" style="left:763.7px;top:487.800px" width="16.200" height="16.200" viewBox="0 0 18 18" fill="none" stroke="#595959" stroke-width="1.700"><path d="M1 5.500V1h4.500M12.500 1H17v4.500M17 12.500V17h-4.500M5.500 17H1v-4.500"/></svg>
<div class="a h26" style="left:707px">原因是屏幕最上层被其他电脑软件遮挡了，下面分享最简单的破解方法：</div>
<div class="a bq" style="left:707px"></div>
<div class="a bqt" style="left:730px">1、直接捕获这个元素，就是这个大块的元素</div>
<div class="a h20" style="left:694px;top:1055.500px">封面</div>
<div class="a" style="left:694px;top:1091px;width:265px;height:176px;background:#fcfcfd;border:2px dashed #e6e8ee;border-radius:4px"></div>
<div class="a" style="left:815px;top:1134px;width:26px;height:20px;border:3px solid #555;border-radius:3px;background:#777"></div>
<div class="a" style="left:694px;top:1166px;width:265px;text-align:center;font-size:17.500px;line-height:26px;color:#8a94a6">上传封面</div>
<div class="a" style="left:694px;top:1202px;width:265px;text-align:center;font-size:14px;line-height:22px;color:#c3c9d6">建议尺寸 512*288 jpg/png/gif</div>
<div class="a hdr"></div>
<div class="a logo" style="left:371px;top:233.500px"></div>
<svg class="a" style="left:371px;top:233.800px" width="33" height="33" viewBox="0 0 33 33" fill="none"><ellipse cx="16.400" cy="12.500" rx="10.700" ry="6.400" fill="#fff"/><rect x="10.100" y="9.300" width="13" height="6.300" rx="3.150" stroke="#e8333f" stroke-width="2.200"/><path d="M13.900 18.300c-1 3.600-.200 6.600 2.200 9.200" stroke="#fff" stroke-width="2.100"/><path d="M18.300 18.800c1.400 2.300 1 4.400-1.100 5.900" stroke="#fff" stroke-width="1.800"/></svg>
<div class="a brand" style="left:412px">影刀</div>
<div class="a sep" style="left:490px"></div>
<div class="a comm" style="left:505.5px">开发者社区</div>
<div class="a nav" style="left:660.5px">影刀学院</div>
<div class="a nav" style="left:770.5px">帮助中心</div>
<svg class="a" style="left:1687px;top:241px" width="22" height="24" viewBox="0 0 22 24" fill="none" stroke="#8a94a6" stroke-width="1.600"><path d="M9.500 2.300h3.500M11 2.300v2.700"/><path d="M11 5.500a6 6 0 0 0-6 6V16L3 19h16l-2-3v-4.500a6 6 0 0 0-6-6zM8.500 22h5"/></svg>
<div class="a" style="left:1701px;top:229.500px;width:17px;height:17px;border-radius:50%;background:#fb4c4f;color:#fff;font-size:15px;line-height:17.500px;text-align:center">2</div>
<div class="a" style="left:1749.4px;top:237px;font-size:17.500px;line-height:26px;color:#8a94a6">Code拾光者</div>
<svg class="a" style="left:1855px;top:243px" width="16" height="12" viewBox="0 0 16 12" fill="none" stroke="#8a94a6" stroke-width="1.500"><path d="M1.300 1.300L8 10.300l6.700-9"/></svg>
<div class="a" style="left:2150px;top:1250px;width:66px;height:60px;border:3px solid #c9b9a6;border-radius:50% 50% 46% 46%;background:#fffdf8"></div>
<div class="a" style="left:2168px;top:1302px;width:34px;height:40px;border:3px solid #c9b9a6;border-radius:40% 40% 30% 30%;background:#fffdf8"></div>
<div class="a" style="left:2160px;top:1296px;width:50px;height:10px;background:#e0554f;border-radius:5px"></div>
<div class="a" style="left:2168px;top:1274px;font-size:18px;line-height:20px;color:#a48">•ᴗ•</div>
<div class="a task"></div>
<svg class="a" style="left:24px;top:1357px" width="28" height="28" viewBox="0 0 28 28" fill="#2d8ae6"><rect x="1" y="1" width="12" height="12"/><rect x="15" y="1" width="12" height="12"/><rect x="1" y="15" width="12" height="12"/><rect x="15" y="15" width="12" height="12"/></svg>
<div class="a" style="left:72px;top:1350px;width:196px;height:40px;border-radius:20px;background:#f5f3f0"></div>
<div class="a" style="left:90px;top:1359px;font-size:17px;line-height:22px;color:#444">⌕ 搜索</div>
<div class="a" style="left:292px;top:1357px;width:26px;height:26px;border-radius:4px;background:#e8c55a"></div>
<div class="a" style="left:362px;top:1357px;width:26px;height:26px;border-radius:50%;background:#2f7de1"></div>
<div class="a" style="left:416px;top:1357px;width:26px;height:26px;border-radius:50%;background:#e65c2e"></div>
<div class="a" style="left:471px;top:1357px;width:26px;height:26px;border-radius:50%;background:#e3502f"></div>
<div class="a" style="left:527px;top:1357px;width:26px;height:26px;border-radius:50%;background:#3b7af0"></div>
<div class="a" style="left:579px;top:1357px;width:26px;height:26px;border-radius:50%;background:#2bb24c"></div>
<div class="a" style="left:638px;top:1357px;width:26px;height:26px;border-radius:50%;background:#3a6fd8"></div>
<div class="a" style="left:693px;top:1357px;width:26px;height:26px;border-radius:4px;background:#6aa7e8"></div>
<div class="a" style="left:749px;top:1357px;width:26px;height:26px;border-radius:4px;background:#f2b632"></div>
<div class="a" style="left:802px;top:1357px;width:26px;height:26px;border-radius:4px;background:#e6a23c"></div>
<div class="a" style="left:530px;top:1392px;width:20px;height:4px;border-radius:2px;background:#4a7be0"></div>
<div class="a" style="left:283px;top:1353px;width:46px;height:34px;border-radius:10px;background:#3a3a3a"></div>
<div class="a" style="left:286px;top:1358px;width:40px;height:24px;border-radius:8px;background:#f1d36a"></div>
<div class="a" style="left:1795px;top:1363px;width:15px;height:15px;border-radius:4px;background:#777"></div>
<div class="a" style="left:1836px;top:1363px;width:15px;height:15px;border-radius:4px;background:#39c56a"></div>
<div class="a" style="left:1872px;top:1363px;width:15px;height:15px;border-radius:4px;background:#4b8df0"></div>
<div class="a" style="left:1912px;top:1363px;width:15px;height:15px;border-radius:4px;background:#d0d0d0"></div>
<div class="a" style="left:1958px;top:1363px;width:15px;height:15px;border-radius:4px;background:#f08a2a"></div>
<div class="a" style="left:2000px;top:1363px;width:15px;height:15px;border-radius:4px;background:#555"></div>
<div class="a" style="left:2030px;top:1363px;width:15px;height:15px;border-radius:4px;background:#555"></div>
<div class="a" style="left:2060px;top:1363px;width:15px;height:15px;border-radius:4px;background:#555"></div>
<div class="a" style="left:2096px;top:1348px;font-size:14px;line-height:20px;color:#333;text-align:right;width:70px">17:05<br>2025/6/6</div>
<div class="a" style="left:2190px;top:1362px;width:16px;height:16px;border:1.500px solid #555;border-radius:3px"></div>
</div>
<div class="a tint"></div>
</div>
<div class="a gbtn" style="left:821px;top:961px;width:105px;height:42px"></div>
<div class="a d16" style="left:821px;top:971px;width:105px;text-align:center;word-spacing:2px">帮 助</div>
<div class="a gbtn" style="left:1377px;top:961px;width:105px;height:42px;background:#fe5151"></div>
<div class="a d16" style="left:1377px;top:971px;width:105px;text-align:center;color:#fff;word-spacing:2px">完 成</div>
<div class="a gbtn" style="left:1492px;top:961px;width:111px;height:42px"></div>
<div class="a d16" style="left:1492px;top:971px;width:111px;text-align:center">保存并继续</div>
<svg class="a" style="left:0;top:0" width="1710" height="1084" viewBox="0 0 1710 1084" fill="#b3b9c7"><path d="M1626.4 1010.5h3v-3z"/><path d="M1621.7 1015.5h3v-3z"/><path d="M1626.4 1015.5h3v-3z"/><path d="M1617.3 1020.3h3v-3z"/><path d="M1621.7 1020.3h3v-3z"/><path d="M1626.4 1020.3h3v-3z"/><path d="M1612.5 1025.2h3v-3z"/><path d="M1617.3 1025.2h3v-3z"/><path d="M1621.7 1025.2h3v-3z"/><path d="M1626.4 1025.2h3v-3z"/><path d="M1619 1028.500h13.500v-14" fill="none" stroke="#d5d9e3" stroke-width="1" stroke-dasharray="3 1.500"/></svg>
</body>
</html>
